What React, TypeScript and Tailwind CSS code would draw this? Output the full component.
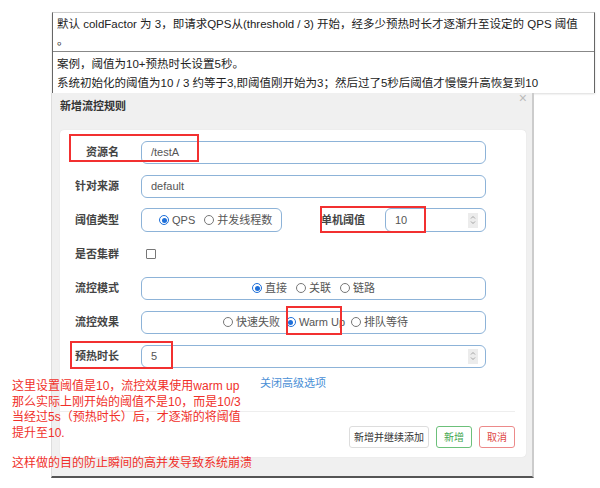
import React from 'react';

const FONT = "font-['Liberation_Sans','Noto_Sans_CJK_SC',sans-serif]";

function Radio({ checked, label }: { checked?: boolean; label: string }) {
  return (
    <span className="flex items-center gap-[3px]">
      <span
        className={`flex h-[10px] w-[10px] items-center justify-center rounded-full border ${
          checked ? 'border-[#1e6fd9]' : 'border-[#777]'
        }`}
      >
        {checked && <span className="h-[5px] w-[5px] rounded-full bg-[#1e6fd9]" />}
      </span>
      <span>{label}</span>
    </span>
  );
}

function Spinner() {
  return (
    <span className="flex h-[15px] w-[10px] flex-col items-center justify-center bg-[#ececec]">
      <svg width="6" height="12" viewBox="0 0 6 12" fill="none" stroke="#999" strokeWidth="0.9">
        <path d="M1 4.5 L3 2.5 L5 4.5" />
        <path d="M1 7.5 L3 9.5 L5 7.5" />
      </svg>
    </span>
  );
}

function Row({ label, children }: { label: string; children: React.ReactNode }) {
  return (
    <div className="flex h-[34px] items-center">
      <div className="w-[59px] text-right text-[11px] font-bold text-[#444]">{label}</div>
      <div className="ml-[22px] flex flex-1 items-center">{children}</div>
    </div>
  );
}

const box = 'h-[23px] rounded-[6px] border border-[#8db3d8] bg-white';

export default function App() {
  return (
    <div className={`relative h-[488px] w-[600px] overflow-hidden bg-white ${FONT}`}>
      {/* note */}
      <div className="ml-[52px] mt-[12px] w-[543px] border-x border-t border-x-[#666] border-t-[#ccc] text-[11.5px] text-[#222] shadow-[0_1px_2px_rgba(0,0,0,0.15)]">
        <div className="border-b border-[#888] px-[4px] pt-[3px] pb-[1px] leading-[17px]">
          <div>默认 coldFactor 为 3，即请求QPS从(threshold / 3) 开始，经多少预热时长才逐渐升至设定的 QPS 阈值</div>
          <div>。</div>
        </div>
        <div className="px-[4px] pt-[3px] leading-[19px]">
          <div>案例，阈值为10+预热时长设置5秒。</div>
          <div>系统初始化的阈值为10 / 3 约等于3,即阈值刚开始为3；然后过了5秒后阈值才慢慢升高恢复到10</div>
        </div>
      </div>

      {/* modal */}
      <div className="relative ml-[51px] flex h-[385px] w-[483px] flex-col border-b-2 border-l border-r-2 border-b-[#555] border-l-[#ddd] border-r-[#ccc] bg-[#f0f0f0]">
        <div className="flex h-[37px] items-start pl-[8px] pt-[5px] text-[11px] font-bold text-[#333]">新增流控规则</div>
        <span className="absolute right-[5px] top-[-2px] text-[14px] leading-none text-[#bbb]">×</span>

        <div className="ml-[8px] mr-[6px] flex h-[327px] flex-col rounded-[4px] bg-white pt-[5px] text-[11px] text-[#555] shadow-[0_0_1px_rgba(0,0,0,0.15)]">
          <div className="pr-[40px]">
            <Row label="资源名">
              <div className={`${box} flex flex-1 items-center pl-[9px]`}>/testA</div>
            </Row>
            <Row label="针对来源">
              <div className={`${box} flex flex-1 items-center pl-[9px]`}>default</div>
            </Row>
            <Row label="阈值类型">
              <div className={`${box} flex h-[24px] w-[141px] items-center gap-[9px] pl-[17px]`}>
                <Radio checked label="QPS" />
                <Radio label="并发线程数" />
              </div>
              <div className="ml-[39px] w-[44px] text-[11px] font-bold text-[#444]">单机阈值</div>
              <div className={`${box} ml-[20px] flex h-[24px] flex-1 items-center justify-between pl-[9px] pr-[7px]`}>
                <span>10</span>
                <Spinner />
              </div>
            </Row>
            <Row label="是否集群">
              <span className="ml-[5px] h-[10px] w-[10px] rounded-[1px] border border-[#777]" />
            </Row>
            <Row label="流控模式">
              <div className={`${box} flex flex-1 items-center justify-center gap-[9px]`}>
                <Radio checked label="直接" />
                <Radio label="关联" />
                <Radio label="链路" />
              </div>
            </Row>
            <Row label="流控效果">
              <div className={`${box} flex flex-1 items-center justify-center gap-[6px] pl-[4px]`}>
                <Radio label="快速失败" />
                <Radio checked label="Warm Up" />
                <Radio label="排队等待" />
              </div>
            </Row>
            <Row label="预热时长">
              <div className={`${box} flex flex-1 items-center justify-between pl-[9px] pr-[7px]`}>
                <span>5</span>
                <Spinner />
              </div>
            </Row>
          </div>
          <div className="flex h-[20px] items-center pl-[200px] text-[11px] text-[#4a8fd6]">关闭高级选项</div>
          <div className="mr-[11px] mt-[18px] border-t border-[#eee]" />
          <div className="mt-[14px] flex justify-end gap-[7px] pr-[11px] text-[10px]">
            <span className="flex h-[22px] w-[80px] items-center justify-center rounded-[3px] border border-[#ddd] text-[#333]">新增并继续添加</span>
            <span className="flex h-[22px] w-[36px] items-center justify-center rounded-[3px] border border-[#6cc07a] text-[#3fa64f]">新增</span>
            <span className="flex h-[22px] w-[36px] items-center justify-center rounded-[3px] border border-[#ec8a8a] text-[#e04848]">取消</span>
          </div>
        </div>
      </div>

      {/* red highlight boxes */}
      <div className="absolute left-[69px] top-[134px] h-[28px] w-[130px] border-2 border-[#f23030]" />
      <div className="absolute left-[320px] top-[206px] h-[27px] w-[106px] border-2 border-[#f23030]" />
      <div className="absolute left-[286px] top-[306px] h-[29px] w-[56px] border-2 border-[#f23030]" />
      <div className="absolute left-[70px] top-[341px] h-[28px] w-[103px] border-2 border-[#f23030]" />

      {/* annotation */}
      <div className="absolute left-[12px] top-[379px] text-[12px] leading-[15.5px] text-[#f0302a]">
        <div>这里设置阈值是10，流控效果使用warm up</div>
        <div>那么实际上刚开始的阈值不是10，而是10/3</div>
        <div>当经过5s（预热时长）后，才逐渐的将阈值</div>
        <div>提升至10.</div>
        <div className="mt-[15px]">这样做的目的防止瞬间的高并发导致系统崩溃</div>
      </div>
    </div>
  );
}
